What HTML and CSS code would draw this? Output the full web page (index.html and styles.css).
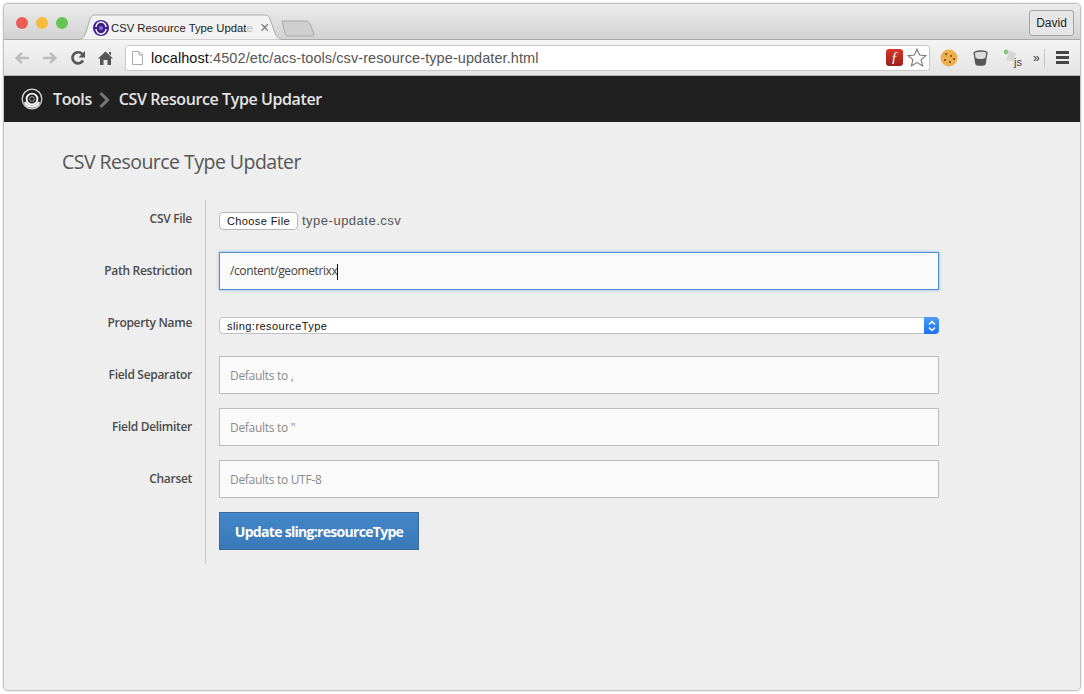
FILE: index.html
```html
<!DOCTYPE html>
<html lang="en">
<head>
    <meta charset="UTF-8">
    <title>CSV Resource Type Updater</title>
    <link rel="stylesheet" href="styles.css">
</head>
<body>
    <div class="window">

        <!-- Browser tabs -->
        <div class="titlebar">
            <div class="lights">
                <span class="light red"></span>
                <span class="light yellow"></span>
                <span class="light green"></span>
            </div>
            <div class="tab">
                <svg class="tab-shape" width="205" height="26" viewBox="0 0 205 26">
                    <path d="M0 25.5 C5 25 6 23 8 18 L12 5 C13 2 14 1 18 1 H186 C190 1 191 2 192 5 L197 19 C199 24 201 25 205 25.5" fill="#f2f2f2" stroke="#a9a9a9"/>
                </svg>
                <svg class="favicon" width="16" height="16" viewBox="0 0 16 16">
                    <circle cx="8" cy="8" r="8" fill="#3f1f8f"/>
                    <path d="M3 7 A5 5 0 0 1 13 7 M13 9 A5 5 0 0 1 3 9" fill="none" stroke="#fff" stroke-width="1.4"/>
                    <circle cx="8" cy="8" r="2" fill="#8f6fd0"/>
                </svg>
                <span class="tab-title">CSV Resource Type Updat<span class="tab-fade">e</span></span>
                <span class="tab-close">×</span>
            </div>
            <svg class="new-tab" width="34" height="17" viewBox="0 0 34 17">
                <path d="M1 1 H25 C27 1 28 2 29 4 L33 14 C33 15 32 16 31 16 H7 C5 16 4 15 4 13 Z" fill="#cfcfcf" stroke="#a8a8a8"/>
            </svg>
            <button class="profile">David</button>
        </div>

        <!-- Browser toolbar -->
        <div class="toolbar">
            <svg class="nav-icon" width="16" height="14" viewBox="0 0 16 14">
                <path d="M15 7 H3 M8 2 L2.5 7 L8 12" fill="none" stroke="#bcbcbc" stroke-width="2.4"/>
            </svg>
            <svg class="nav-icon" width="16" height="14" viewBox="0 0 16 14">
                <path d="M1 7 H13 M8 2 L13.5 7 L8 12" fill="none" stroke="#bcbcbc" stroke-width="2.4"/>
            </svg>
            <svg class="nav-icon" width="16" height="16" viewBox="0 0 16 16">
                <path d="M13 10.5 A5.6 5.6 0 1 1 12.2 4" fill="none" stroke="#555" stroke-width="2.6"/>
                <path d="M15 1 V7.5 H8.5 Z" fill="#555"/>
            </svg>
            <svg class="nav-icon" width="15" height="14" viewBox="0 0 15 14">
                <path d="M7.5 0.5 L15 7.5 H13 V14 H9.5 V9 H5.5 V14 H2 V7.5 H0 Z M11 1 H13 V4.5 L11 2.8 Z" fill="#555"/>
            </svg>
            <div class="omnibox">
                <svg class="page-icon" width="11" height="14" viewBox="0 0 11 14">
                    <path d="M0.5 0.5 H7 L10.5 4 V13.5 H0.5 Z M7 0.5 V4 H10.5" fill="#fff" stroke="#aaa"/>
                </svg>
                <span class="url"><b>localhost</b>:4502/etc/acs-tools/csv-resource-type-updater.html</span>
                <span class="flash">ƒ</span>
                <svg width="20" height="19" viewBox="0 0 20 19">
                    <path d="M10 1.2 L12.6 7 L18.9 7.6 L14.1 11.7 L15.6 17.9 L10 14.6 L4.4 17.9 L5.9 11.7 L1.1 7.6 L7.4 7 Z" fill="#fff" stroke="#777" stroke-width="1.1"/>
                </svg>
            </div>
            <div class="extensions">
                <svg width="18" height="18" viewBox="0 0 18 18">
                    <circle cx="9" cy="9" r="8.5" fill="#eeb04f"/>
                    <circle cx="6" cy="5" r="1" fill="#6e4316"/>
                    <circle cx="11" cy="7" r="1" fill="#6e4316"/>
                    <circle cx="5" cy="11" r="1" fill="#6e4316"/>
                    <circle cx="10" cy="13" r="1" fill="#6e4316"/>
                    <circle cx="14" cy="10" r="1" fill="#6e4316"/>
                </svg>
                <svg width="15" height="16" viewBox="0 0 15 16">
                    <ellipse cx="7.5" cy="3" rx="6.5" ry="2" fill="#ddd" stroke="#555" stroke-width="1.3"/>
                    <path d="M1.2 3.5 L3 14 C3.5 15.6 11.5 15.6 12 14 L13.8 3.5" fill="#ddd" stroke="#555" stroke-width="1.3"/>
                    <path d="M2 7.5 C5 9.5 10 9.5 13 7.5 L12 14 C11 15.4 4 15.4 3 14 Z" fill="#555"/>
                </svg>
                <span class="js-ext">
                    <svg width="16" height="16" viewBox="0 0 16 16">
                        <circle cx="3" cy="3" r="2.4" fill="#7fca7f"/>
                        <path d="M6 1 L13 4 L11 12 L3 11 Z" fill="#d6d6d6"/>
                    </svg>
                    <span class="js-label">js</span>
                </span>
                <span class="more">»</span>
                <span class="ext-sep"></span>
                <span class="menu"><i></i><i></i><i></i></span>
            </div>
        </div>

        <!-- App header -->
        <header class="app-header">
            <svg width="22" height="22" viewBox="0 0 22 22">
                <circle cx="11" cy="11" r="9.8" fill="none" stroke="#d8d8d8" stroke-width="1.3"/>
                <path d="M4 14 A7.6 7.6 0 0 0 18 14" fill="none" stroke="#fff" stroke-width="2.4"/>
                <circle cx="11" cy="11" r="5.4" fill="none" stroke="#fff" stroke-width="1.8"/>
                <circle cx="11" cy="11" r="2.4" fill="none" stroke="#bbb" stroke-width="0.8"/>
            </svg>
            <span class="crumb">Tools</span>
            <svg width="11" height="16" viewBox="0 0 11 16">
                <path d="M1.5 1 L8.5 8 L1.5 15" fill="none" stroke="#777" stroke-width="3"/>
            </svg>
            <span class="crumb">CSV Resource Type Updater</span>
        </header>

        <!-- Page content -->
        <main class="content">
            <h1>CSV Resource Type Updater</h1>
            <form class="update-form">
                <div class="form-row">
                    <label>CSV File</label>
                    <div class="file-field">
                        <button type="button" class="file-button">Choose File</button>
                        <span class="file-name">type-update.csv</span>
                    </div>
                </div>
                <div class="form-row">
                    <label>Path Restriction</label>
                    <div class="text-field focused">/content/geometrixx<span class="caret"></span></div>
                </div>
                <div class="form-row">
                    <label>Property Name</label>
                    <div class="select-field">
                        <span>sling:resourceType</span>
                        <span class="select-arrows">
                            <svg width="8" height="12" viewBox="0 0 8 12">
                                <path d="M1 4.5 L4 1.5 L7 4.5 M1 7.5 L4 10.5 L7 7.5" fill="none" stroke="#fff" stroke-width="1.5"/>
                            </svg>
                        </span>
                    </div>
                </div>
                <div class="form-row">
                    <label>Field Separator</label>
                    <input class="text-field" type="text" placeholder="Defaults to ,">
                </div>
                <div class="form-row">
                    <label>Field Delimiter</label>
                    <input class="text-field" type="text" placeholder="Defaults to &quot;">
                </div>
                <div class="form-row">
                    <label>Charset</label>
                    <input class="text-field" type="text" placeholder="Defaults to UTF-8">
                </div>
                <div class="form-row">
                    <label></label>
                    <button type="button" class="submit-button">Update sling:resourceType</button>
                </div>
            </form>
        </main>
    </div>
</body>
</html>
```

FILE: styles.css
```css
* {
    box-sizing: border-box;
}
html, body {
    height: 100%;
}
body {
    margin: 0;
    padding: 3px;
    background-color: #fff;
    font-family: "Liberation Sans", Arial, sans-serif;
}

.window {
    height: 688px;
    width: 1078px;
    border: 1px solid #c4c4c4;
    border-radius: 5px;
    overflow: hidden;
    display: flex;
    flex-direction: column;
    box-shadow: 0 0 2px rgba(0, 0, 0, 0.25);
    background-color: #eee;
}

/* Browser tabs */
.titlebar {
    height: 36px;
    flex: none;
    display: flex;
    align-items: flex-start;
    background: linear-gradient(#ececec, #d2d2d2);
    border-bottom: 1px solid #a9a9a9;
    position: relative;
}
.lights {
    display: flex;
    gap: 8px;
    padding: 13px 0 0 12px;
}
.light {
    width: 12px;
    height: 12px;
    border-radius: 50%;
}
.light.red { background-color: #ee5b55; }
.light.yellow { background-color: #f7bb3c; }
.light.green { background-color: #62c554; }

.tab {
    width: 203px;
    height: 26px;
    margin: 10px 0 0 10px;
    position: relative;
    display: flex;
    align-items: center;
    padding: 2px 0 0 15px;
}
.tab-shape {
    position: absolute;
    left: 0;
    top: 0;
}
.favicon {
    position: relative;
    flex: none;
}
.tab-title {
    position: relative;
    margin-left: 2px;
    width: 149px;
    white-space: nowrap;
    overflow: hidden;
    font-size: 11.3px;
    color: #222;
}
.tab-fade {
    color: #bbb;
}
.tab-close {
    position: relative;
    font-size: 16px;
    line-height: 16px;
    color: #777;
}
.new-tab {
    margin: 16px 0 0 0;
}
.profile {
    position: absolute;
    right: 6px;
    top: 6px;
    width: 45px;
    height: 26px;
    padding: 0;
    border: 1px solid #a4a4a4;
    border-radius: 3px;
    background-color: #e6e6e6;
    font-family: "Liberation Sans", Arial, sans-serif;
    font-size: 12px;
    color: #222;
}

/* Browser toolbar */
.toolbar {
    height: 36px;
    flex: none;
    display: flex;
    align-items: center;
    padding: 0 0 0 10px;
    background: linear-gradient(#f4f4f4, #e4e4e4);
    border-bottom: 1px solid #b5b5b5;
}
.nav-icon {
    margin-right: 12px;
    flex: none;
}
.omnibox {
    width: 805px;
    height: 26px;
    display: flex;
    align-items: center;
    padding: 0 2px 0 6px;
    background-color: #fff;
    border: 1px solid #c8c8c8;
    border-radius: 3px;
}
.page-icon {
    flex: none;
}
.url {
    margin-left: 8px;
    flex: 1;
    font-size: 14.5px;
    letter-spacing: 0.08px;
    color: #555;
    white-space: nowrap;
}
.url b {
    font-weight: normal;
    color: #111;
}
.flash {
    width: 17px;
    height: 17px;
    margin-right: 4px;
    border-radius: 3px;
    background: linear-gradient(#d9352b, #98201a);
    color: #fff;
    font-family: "Liberation Serif", serif;
    font-style: italic;
    font-size: 15px;
    line-height: 17px;
    text-align: center;
}
.extensions {
    flex: 1;
    display: flex;
    align-items: center;
    padding-left: 10px;
}
.extensions > svg:nth-child(2) {
    margin-left: 15px;
}
.js-ext {
    width: 18px;
    height: 18px;
    margin-left: 15px;
    position: relative;
}
.js-label {
    position: absolute;
    right: -1px;
    bottom: -1px;
    font-size: 11px;
    line-height: 11px;
    color: #444;
}
.more {
    margin-left: 12px;
    font-size: 12px;
    color: #333;
}
.ext-sep {
    width: 1px;
    height: 18px;
    margin-left: 4px;
    background-color: #c4c4c4;
}
.menu {
    margin-left: 11px;
    width: 13px;
    display: flex;
    flex-direction: column;
    gap: 2px;
}
.menu i {
    height: 3px;
    background-color: #444;
}

/* App header */
.app-header {
    height: 46px;
    flex: none;
    display: flex;
    align-items: center;
    padding-left: 17px;
    background-color: #202020;
}
.crumb {
    font-family: "Open Sans", sans-serif;
    font-weight: 600;
    font-size: 16px;
    letter-spacing: -0.4px;
    color: #e4e4e4;
}
.app-header svg:first-child {
    margin-right: 10px;
}
.app-header svg:nth-child(3) {
    margin: 1px 9px 0 7px;
}

/* Page content */
.content {
    flex: 1;
    background-color: #eee;
    font-family: "Open Sans", sans-serif;
}
h1 {
    margin: 0;
    padding: 28px 0 0 58px;
    height: 78px;
    font-weight: 400;
    font-size: 19.5px;
    line-height: 24px;
    letter-spacing: -0.53px;
    color: #555;
}
.update-form {
    display: flex;
    flex-direction: column;
    gap: 14px;
    width: 935px;
    padding-bottom: 14px;
    background: linear-gradient(#c6c6c6, #c6c6c6) 201px 0 / 1px 100% no-repeat;
}
.form-row {
    display: flex;
    height: 38px;
}
.form-row label {
    width: 188px;
    margin-right: 27px;
    flex: none;
    padding-top: 10px;
    text-align: right;
    font-weight: 600;
    font-size: 12px;
    line-height: 18px;
    letter-spacing: -0.3px;
    color: #4b4b4b;
}
.file-field {
    display: flex;
    align-items: center;
    height: 38px;
    padding-top: 4px;
    gap: 4px;
}
.file-button {
    width: 79px;
    height: 18px;
    padding: 0 0 1px;
    border: 1px solid #b8b8b8;
    border-radius: 4px;
    background-color: #fff;
    font-family: "Liberation Sans", Arial, sans-serif;
    font-size: 11px;
    letter-spacing: 0.4px;
    color: #111;
}
.file-name {
    margin-top: -2px;
    font-family: "Liberation Sans", Arial, sans-serif;
    font-size: 13px;
    letter-spacing: 0.5px;
    color: #555;
}
.text-field {
    display: block;
    width: 720px;
    height: 38px;
    padding: 0 10px;
    border: 1px solid #bdbdbd;
    background-color: #fafafa;
    font-family: "Open Sans", sans-serif;
    font-size: 12px;
    letter-spacing: -0.3px;
    line-height: 36px;
    color: #444;
    outline: none;
}
.text-field::placeholder {
    color: #8b8b8b;
    opacity: 1;
}
.text-field.focused {
    border-color: #4a90d9;
    letter-spacing: -0.4px;
    box-shadow: 0 0 3px rgba(74, 144, 217, 0.6);
}
.caret {
    display: inline-block;
    width: 1px;
    height: 16px;
    vertical-align: middle;
    background-color: #111;
}
.select-field {
    width: 720px;
    height: 17px;
    margin-top: 13px;
    display: flex;
    align-items: center;
    justify-content: space-between;
    padding-left: 7px;
    border: 1px solid #c0c0c0;
    border-radius: 4px;
    background-color: #fff;
    font-family: "Liberation Sans", Arial, sans-serif;
    font-size: 11px;
    letter-spacing: 0.45px;
    color: #111;
}
.select-arrows {
    width: 15px;
    height: 17px;
    margin-right: -1px;
    display: flex;
    align-items: center;
    justify-content: center;
    border-radius: 0 4px 4px 0;
    background: linear-gradient(#4c9cf5, #1a72f0);
}
.submit-button {
    width: 200px;
    height: 38px;
    padding: 0;
    border: 1px solid #3a6a9c;
    background: linear-gradient(#4287c9, #3b79b8);
    font-family: "Open Sans", sans-serif;
    font-weight: 700;
    font-size: 14px;
    letter-spacing: -0.7px;
    color: #fff;
}
```
